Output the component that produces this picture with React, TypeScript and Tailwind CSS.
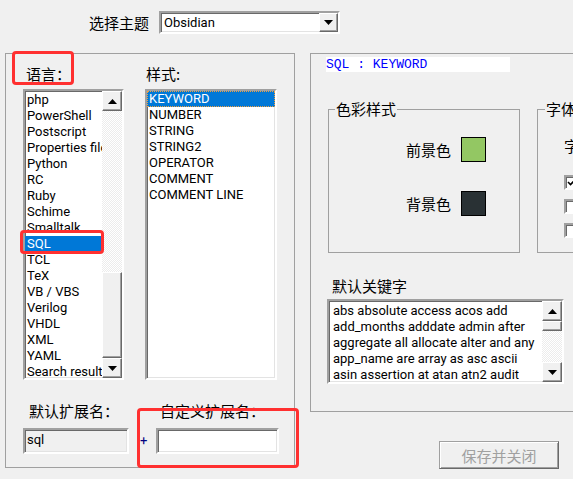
import React from "react";

// shared looks of the classic win32 controls
const cjk = "font-['Noto_Sans_CJK_SC',sans-serif] text-[15px] leading-[15px]";
const sunken =
  "border-2 border-t-[#a0a0a0] border-l-[#a0a0a0] border-r-white border-b-white shadow-[inset_1px_1px_0_#696969,inset_-1px_-1px_0_#e3e3e3]";
const raised =
  "bg-[#f0f0f0] border border-t-white border-l-white border-r-[#696969] border-b-[#696969] shadow-[inset_-1px_-1px_0_#a0a0a0]";
const dither =
  "bg-[repeating-conic-gradient(#ffffff_0_25%,#ececec_0_50%)] bg-[length:2px_2px]";

const languages = [
  "php",
  "PowerShell",
  "Postscript",
  "Properties file",
  "Python",
  "RC",
  "Ruby",
  "Schime",
  "Smalltalk",
  "SQL",
  "TCL",
  "TeX",
  "VB / VBS",
  "Verilog",
  "VHDL",
  "XML",
  "YAML",
  "Search result",
];

const styles = ["KEYWORD", "NUMBER", "STRING", "STRING2", "OPERATOR", "COMMENT", "COMMENT LINE"];

const keywords = [
  "abs absolute access acos add",
  "add_months adddate admin after",
  "aggregate all allocate alter and any",
  "app_name are array as asc ascii",
  "asin assertion at atan atn2 audit",
];

const Arrow: React.FC<{ up?: boolean }> = ({ up }) => (
  <svg width="9" height="5" viewBox="0 0 9 5">
    <polygon points={up ? "0,5 9,5 4.5,0" : "0,0 9,0 4.5,5"} fill="#000" />
  </svg>
);

const ArrowButton: React.FC<{ up?: boolean }> = ({ up }) => (
  <div className={`${raised} h-[20px] shrink-0 flex items-center justify-center`}>
    <Arrow up={up} />
  </div>
);

const Combo: React.FC = () => (
  <div className={`${sunken} flex w-[181px] h-[23px] bg-white`}>
    <span className="flex-1 pl-[3px] leading-[19px]">Obsidian</span>
    <div className={`${raised} w-[19px] h-full flex items-center justify-center`}>
      <Arrow />
    </div>
  </div>
);

const LeftGroup: React.FC = () => (
  <div className="shrink-0 w-[290px] h-[415px] border border-[#a0a0a0] flex flex-col">
    <div className="flex pt-[12px]">
      {/* language list */}
      <div className="ml-[17px] w-[101px] flex flex-col">
        <span className={`${cjk} pl-[3px]`}>语言：</span>
        <div className={`${sunken} mt-[8px] h-[291px] flex bg-white overflow-hidden`}>
          <div className="flex-1 pt-[1px] overflow-hidden">
            {languages.map((l) => (
              <div
                key={l}
                className={`h-[16px] leading-[16px] pl-[2px] whitespace-nowrap ${
                  l === "SQL" ? "bg-[#0078d7] text-white" : "text-black"
                }`}
              >
                {l}
              </div>
            ))}
          </div>
          <div className="w-[20px] shrink-0 flex flex-col">
            <ArrowButton up />
            <div className={`h-[161px] ${dither}`} />
            <div className={`${raised} h-[86px]`} />
            <ArrowButton />
          </div>
        </div>
      </div>

      {/* style list */}
      <div className="ml-[21px] w-[132px] flex flex-col">
        <span className={`${cjk} pl-[1px]`}>样式:</span>
        <div className={`${sunken} mt-[8px] h-[291px] bg-white overflow-hidden`}>
          {styles.map((s, i) => (
            <div
              key={s}
              className={`h-[16px] leading-[14px] pl-[1px] whitespace-nowrap border ${
                i === 0
                  ? "bg-[#0078d7] text-white border-dotted border-[#f0a040]"
                  : "border-transparent text-black"
              }`}
            >
              {s}
            </div>
          ))}
        </div>
      </div>
    </div>

    <div className="flex mt-[23px]">
      <div className="ml-[17px] w-[106px] flex flex-col">
        <span className={`${cjk} pl-[6px]`}>默认扩展名：</span>
        <div className={`${sunken} mt-[10px] h-[26px] bg-[#f0f0f0] pl-[2px] leading-[19px]`}>sql</div>
      </div>
      <div className="ml-[11px] flex flex-col">
        <span className={`${cjk} pl-[20px]`}>自定义扩展名：</span>
        <div className="flex items-center mt-[10px]">
          <span className="w-[16px] text-[#000080]">+</span>
          <div className={`${sunken} w-[123px] h-[26px] bg-white`} />
        </div>
      </div>
    </div>
  </div>
);

const Swatch: React.FC<{ label: string; color: string }> = ({ label, color }) => (
  <div className="flex items-center gap-[10px]">
    <span className={cjk}>{label}</span>
    <div className={`w-[25px] h-[25px] border border-black ${color}`} />
  </div>
);

const Checkbox: React.FC<{ checked?: boolean }> = ({ checked }) => (
  <div
    className="w-[15px] h-[15px] bg-white border-2 border-t-[#a0a0a0] border-l-[#a0a0a0] border-r-white border-b-white shadow-[inset_1px_1px_0_#696969] flex items-center justify-center"
  >
    {checked && (
      <svg width="9" height="9" viewBox="0 0 9 9">
        <path d="M1 4 L3.5 6.5 L8 2" stroke="#000" strokeWidth="1.6" fill="none" />
      </svg>
    )}
  </div>
);

const RightColumn: React.FC = () => (
  <div className="shrink-0 ml-[15px] flex flex-col">
    <div className="w-[300px] h-[359px] border border-[#a0a0a0] flex flex-col">
      <div className="ml-[15px] mt-[3px] w-[184px] h-[15px] bg-white font-['Liberation_Mono',monospace] text-[13px] leading-[15px] text-[#0000ff] whitespace-pre">
        SQL : KEYWORD
      </div>

      <div className="flex mt-[37px]">
        <div className="relative shrink-0 ml-[17px] w-[192px] h-[144px] border border-[#a0a0a0]">
          <span className={`${cjk} absolute left-[6px] -top-[9px] px-[1px] bg-[#f0f0f0]`}>色彩样式</span>
          <div className="flex flex-col items-end pr-[33px] pt-[27px] gap-[29px]">
            <Swatch label="前景色" color="bg-[#93c763]" />
            <Swatch label="背景色" color="bg-[#293134]" />
          </div>
        </div>
        <div className="relative shrink-0 ml-[17px] w-[120px] h-[144px] border border-[#a0a0a0]">
          <span className={`${cjk} absolute left-[7px] -top-[9px] px-[1px] bg-[#f0f0f0]`}>字体样式</span>
          <div className="pl-[26px] pt-[28px] flex flex-col">
            <span className={cjk}>字体：</span>
            <div className="mt-[22px] flex flex-col gap-[9px]">
              <Checkbox checked />
              <Checkbox />
              <Checkbox />
            </div>
          </div>
        </div>
      </div>

      <span className={`${cjk} ml-[21px] mt-[25px]`}>默认关键字</span>
      <div className={`${sunken} ml-[16px] mt-[6px] w-[237px] h-[85px] bg-white flex`}>
        <div className="flex-1 pt-[2px] pl-[4px] leading-[16px] overflow-hidden whitespace-nowrap">
          {keywords.map((k) => (
            <div key={k}>{k}</div>
          ))}
        </div>
        <div className="w-[20px] shrink-0 flex flex-col">
          <ArrowButton up />
          <div className={`${raised} h-[10px]`} />
          <div className={`h-[31px] ${dither}`} />
          <ArrowButton />
        </div>
      </div>
    </div>

    <button
      disabled
      className={`${cjk} mt-[29px] ml-[129px] w-[120px] h-[28px] bg-[#f0f0f0] text-[#a0a0a0] border border-t-[#a0a0a0] border-l-[#a0a0a0] border-r-[#696969] border-b-[#696969] shadow-[inset_1px_1px_0_#ffffff,inset_-1px_-1px_0_#a0a0a0] flex items-center justify-center`}
    >
      保存并关闭
    </button>
  </div>
);

export default function App() {
  return (
    <div className="relative w-[573px] h-[479px] overflow-hidden bg-[#f0f0f0] font-['Roboto','Noto_Sans_CJK_SC',sans-serif] text-[13px] text-black">
      <div className="flex items-center pl-[89px] pt-[11px]">
        <span className={`${cjk} w-[70px]`}>选择主题</span>
        <Combo />
      </div>

      <div className="flex mt-[19px] pl-[5px]">
        <LeftGroup />
        <RightColumn />
      </div>

      {/* red annotation frames drawn over the dialog */}
      <div className="absolute left-[12px] top-[51px] w-[62px] h-[34px] border-[3px] border-[#ff3030] rounded-[4px]" />
      <div className="absolute left-[20px] top-[230px] w-[84px] h-[24px] border-[3px] border-[#ff3030] rounded-[4px]" />
      <div className="absolute left-[137px] top-[408px] w-[162px] h-[60px] border-[3px] border-[#ff3030] rounded-[4px]" />
    </div>
  );
}
